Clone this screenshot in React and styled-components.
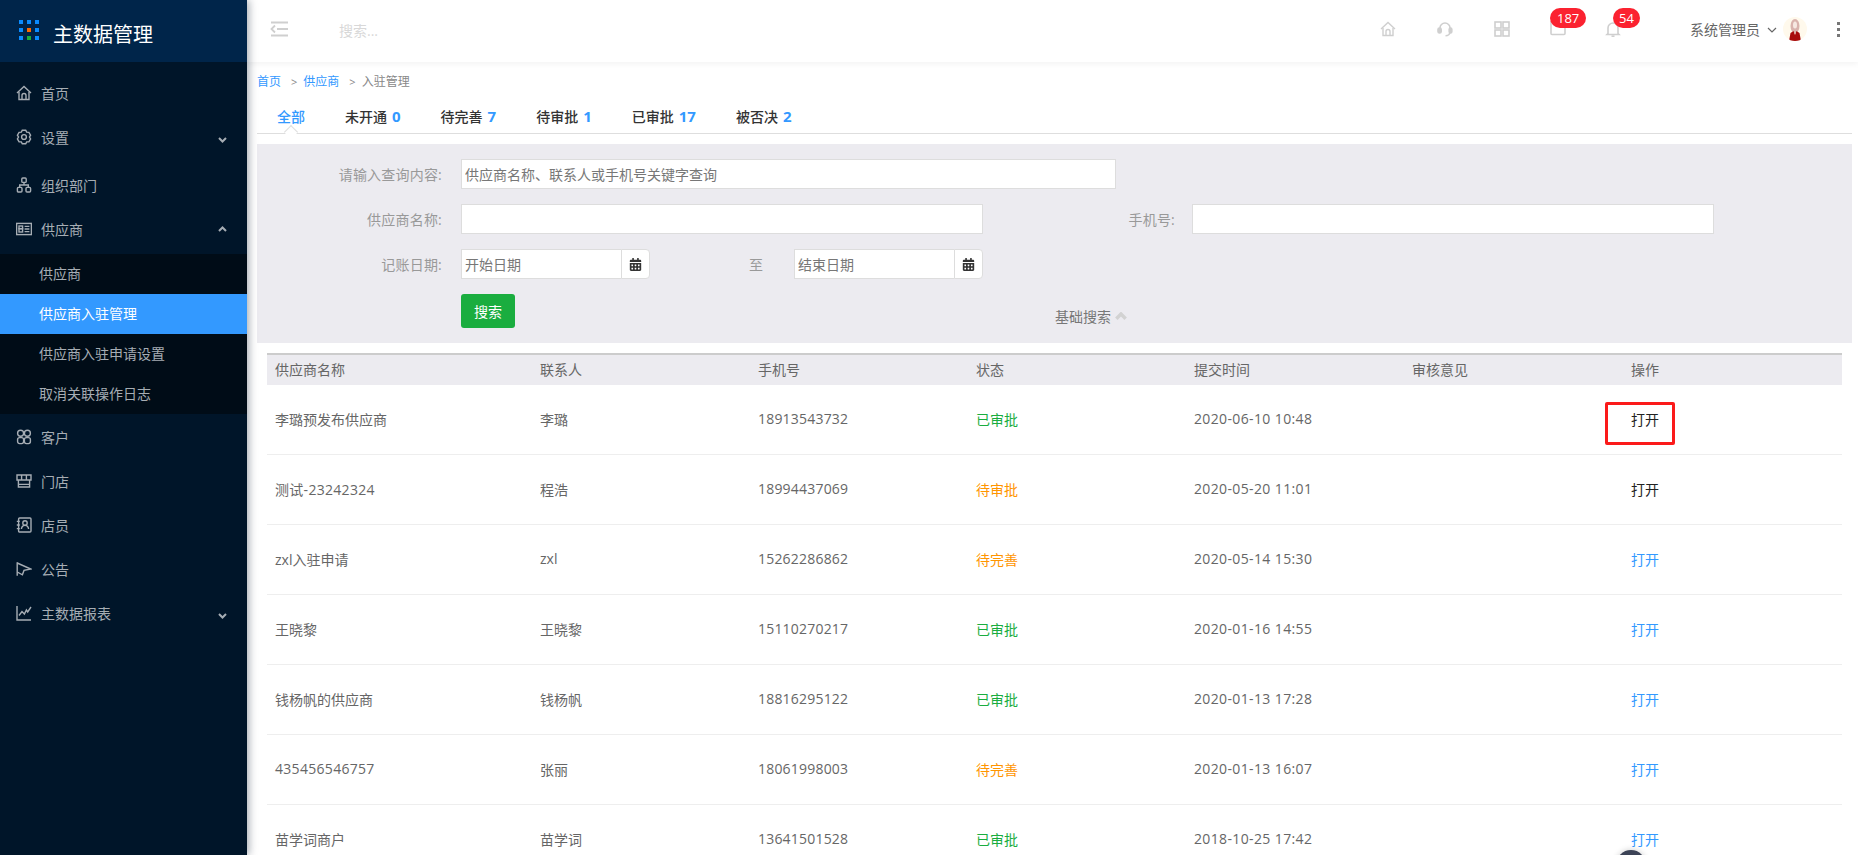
import React from "react";
import styled, { createGlobalStyle } from "styled-components";
import { FaCalendarAlt } from "react-icons/fa";

const GlobalStyle = createGlobalStyle`
  html, body {
    margin: 0;
    height: 100%;
    overflow: hidden;
    background: #fff;
    font-family: "Open Sans", "Noto Sans CJK SC", sans-serif;
    font-size: 14px;
    color: #666;
  }
  * { box-sizing: border-box; }
`;

const Layout = styled.div`
  display: flex;
  width: 100%;
  height: 100vh;
  overflow: hidden;
`;

/* sidebar */
const Sidebar = styled.aside`
  flex: 0 0 247px;
  background: #001529;
  color: #a6adb4;
  box-shadow: 2px 0 8px rgba(0, 21, 41, 0.35);
  z-index: 3;
`;
const Brand = styled.div`
  display: flex;
  align-items: center;
  height: 62px;
  padding-left: 19px;
  background: #00254a;
`;
const Dots = styled.div`
  display: grid;
  grid-template-columns: repeat(3, 4px);
  grid-auto-rows: 4px;
  gap: 4px;
  margin-top: -2px;
`;
const Dot = styled.i`
  background: ${(props) => props.$color || "#0a8cff"};
`;
const BrandName = styled.div`
  margin-left: 14px;
  padding-top: 4px;
  color: #fff;
  font-size: 20px;
`;
const Menu = styled.nav`
  padding-top: 10px;
`;
const MenuItem = styled.div`
  display: flex;
  align-items: center;
  height: 44px;
  padding: 0 20px 2px 16px;
  margin-bottom: ${(props) => props.$after || 0}px;
  svg.icon { width: 16px; height: 16px; margin-right: 9px; flex: none; }
  svg.arrow { width: 9px; height: 6px; margin-left: auto; margin-top: ${(props) => (props.$open ? 0 : 5)}px; }
`;
const SubMenu = styled.div`
  background: #000c17;
  margin-bottom: 2px;
`;
const SubItem = styled.div`
  height: 40px;
  line-height: 40px;
  padding-left: 39px;
  background: ${(props) => (props.$active ? "#3399ff" : "transparent")};
  color: ${(props) => (props.$active ? "#fff" : "#a6adb4")};
`;

/* top bar */
const Main = styled.main`
  flex: 1;
  min-width: 0;
`;
const TopBar = styled.header`
  display: flex;
  align-items: center;
  height: 62px;
  padding: 0 18px 0 23px;
  background: #fff;
  box-shadow: 0 2px 6px rgba(0, 0, 0, 0.05);
  color: #cfcfcf;
  svg.toggle { width: 18px; height: 16px; margin-top: -4px; }
`;
const SearchHint = styled.div`
  flex: 1;
  margin: -2px 0 0 51px;
  color: #d8d8d8;
`;
const IconSlot = styled.div`
  position: relative;
  display: flex;
  justify-content: center;
  width: ${(props) => props.$width || 57}px;
  margin-top: -4px;
  svg { width: 16px; height: 16px; }
`;
const Badge = styled.span`
  position: absolute;
  top: -13px;
  left: ${(props) => props.$left}px;
  height: 20px;
  padding: 0 ${(props) => props.$pad}px;
  border-radius: 10px;
  background: #fb2230;
  color: #fff;
  font-size: 13px;
  line-height: 20px;
`;
const UserName = styled.div`
  margin: -4px 0 0 50px;
  color: #666;
  font-size: 14px;
`;
const UserArrow = styled.svg`
  width: 10px;
  height: 6px;
  margin: -2px 0 0 7px;
  color: #666;
`;
const Avatar = styled.div`
  width: 24px;
  height: 24px;
  margin: -4px 0 0 6px;
  border-radius: 50%;
  background: #fff9ec;
  overflow: hidden;
  svg { display: block; width: 24px; height: 24px; }
`;
const Kebab = styled.div`
  display: grid;
  gap: 3px;
  margin: -4px 0 0 30px;
  i { display: block; width: 3px; height: 3px; background: #777; }
`;

/* content */
const Content = styled.div`
  padding: 0 6px 0 10px;
`;
const Crumbs = styled.div`
  display: flex;
  align-items: center;
  height: 20px;
  margin-top: 9px;
  font-size: 12px;
  color: #888;
  a { color: #3399ff; }
  b { font-weight: 400; margin: 0 6px 0 10px; font-size: 11px; }
`;
const Tabs = styled.div`
  display: flex;
  height: 43px;
  padding-top: 15px;
  border-bottom: 1px solid #dedede;
`;
const Tab = styled.div`
  position: relative;
  height: 27px;
  padding: 0 20px;
  font-weight: 500;
  color: ${(props) => (props.$active ? "#3399ff" : "#333")};
  span { margin-left: 5px; color: #3399ff; font-size: 15px; font-weight: 700; }
  ${(props) =>
    props.$active &&
    `&::after {
      content: "";
      position: absolute;
      left: 29px;
      bottom: -4px;
      width: 9px;
      height: 9px;
      background: #fff;
      border-left: 1px solid #dedede;
      border-top: 1px solid #dedede;
      transform: rotate(45deg);
    }`}
`;
const Filter = styled.section`
  display: grid;
  gap: 15px;
  margin-top: 10px;
  padding: 15px 0;
  background: #ecebf0;
`;
const FilterRow = styled.div`
  display: flex;
  align-items: center;
`;
const Label = styled.label`
  flex: none;
  width: ${(props) => props.$width || 185}px;
  margin-right: ${(props) => props.$gap || 19}px;
  text-align: right;
  letter-spacing: 0.2px;
  color: #999;
`;
const Input = styled.input`
  width: ${(props) => props.$width}px;
  height: 30px;
  padding: 0 3px;
  border: 1px solid #ddd;
  border-right-width: ${(props) => (props.$joined ? 0 : 1)}px;
  outline: none;
  background: #fff;
  font: inherit;
  color: #666;
  &::placeholder { color: #777; opacity: 1; }
`;
const DateGroup = styled.div`
  display: flex;
`;
const DateAddon = styled.span`
  display: flex;
  align-items: center;
  justify-content: center;
  width: 29px;
  height: 30px;
  border: 1px solid #ddd;
  border-radius: 0 4px 4px 0;
  background: #fff;
  color: #333;
  font-size: 13px;
`;
const Until = styled.span`
  margin: 0 31px 0 99px;
  color: #999;
`;
const SearchButton = styled.button`
  width: 54px;
  height: 34px;
  margin-left: 204px;
  padding: 0;
  border: 0;
  border-radius: 3px;
  background: #1aad3f;
  color: #fff;
  font: inherit;
`;
const Toggle = styled.div`
  display: flex;
  align-items: center;
  gap: 4px;
  margin: 10px 0 0 540px;
  color: #777;
  svg { width: 12px; height: 8px; color: #d2d2d2; stroke-width: 2.6; }
`;

/* table */
const Table = styled.div`
  margin: 10px 10px 0;
`;
const columns = "265px 218px 218px 218px 218px 219px 219px";
const HeadRow = styled.div`
  display: grid;
  grid-template-columns: ${columns};
  align-items: center;
  height: 32px;
  padding-bottom: 2px;
  border-top: 2px solid #ccc;
  background: #ecebf0;
  color: #666;
`;
const Row = styled.div`
  display: grid;
  grid-template-columns: ${columns};
  align-items: center;
  height: 70px;
  padding-bottom: 2px;
  border-bottom: 1px solid #eee;
`;
const Cell = styled.div`
  padding-left: 8px;
  letter-spacing: ${(props) => props.$spacing || 0}px;
  color: ${(props) => props.$color || "#666"};
`;
const ActionCell = styled(Cell)`
  position: relative;
`;
const Marker = styled.span`
  position: absolute;
  left: -18px;
  top: calc(50% - 17px);
  width: 70px;
  height: 43px;
  border: 3px solid #fb1a1a;
  border-radius: 2px;
`;
const HelpBall = styled.div`
  position: fixed;
  left: 1616px;
  top: 850px;
  width: 30px;
  height: 30px;
  border-radius: 50%;
  background: #3c4356;
  box-shadow: 0 0 6px rgba(0, 0, 0, 0.2);
`;

const Line = (props) => (
  <svg viewBox="0 0 16 16" fill="none" stroke="currentColor" strokeWidth="1.4" {...props} />
);
const HomeIcon = (p) => (
  <Line {...p}>
    <path d="M1 8 8 1.5 15 8" />
    <path d="M3 7v7.500h10V7" />
    <path d="M6 14.500v-4a2 2 0 0 1 4 0v4" />
  </Line>
);
const GearIcon = (p) => (
  <Line {...p}>
    <path d="M6.300 1.200h3.400l1 1.900 2.200.2 1.700 2.900-1.100 1.800 1.100 1.900-1.700 2.900-2.200.1-1 1.900H6.300l-1-1.900-2.200-.1-1.700-2.900L2.500 8 1.400 6.200l1.700-2.900 2.200-.2z" />
    <circle cx="8" cy="8" r="2.400" />
  </Line>
);
const OrgIcon = (p) => (
  <Line {...p}>
    <rect x="5.800" y="1" width="4.400" height="4.400" rx="1" />
    <rect x="1.400" y="10.400" width="4.600" height="4.600" rx="1" />
    <rect x="10" y="10.400" width="4.600" height="4.600" rx="1" />
    <path d="M8 5.400V8M3.700 10.400V8h8.600v2.400" />
  </Line>
);
const CardIcon = (p) => (
  <Line {...p}>
    <rect x="0.600" y="2.400" width="14.800" height="11.200" />
    <rect x="3" y="5" width="3.600" height="2.600" />
    <rect x="3" y="7.800" width="3.600" height="3.200" />
    <path d="M8.600 5.400h4.800M8.600 8h4.800M8.600 10.600h4.800" />
  </Line>
);
const ClientIcon = (p) => (
  <Line {...p}>
    <circle cx="4.600" cy="4.200" r="3" />
    <circle cx="11.400" cy="4.200" r="3" />
    <rect x="1.600" y="8.600" width="6" height="6" rx="2" />
    <rect x="8.400" y="8.600" width="6" height="6" rx="2" />
  </Line>
);
const StoreIcon = (p) => (
  <Line {...p}>
    <path d="M1 2h14v5H1zM5.600 2v5M10.400 2v5" />
    <path d="M2.400 7v7h11.200V7M2.400 11.400h11.200" />
  </Line>
);
const StaffIcon = (p) => (
  <Line {...p}>
    <rect x="2.600" y="1" width="12.400" height="14" rx="1" />
    <circle cx="9" cy="6" r="2.200" />
    <path d="M5.400 12c.4-2.600 2-3.600 3.600-3.600s3.200 1 3.600 3.600" />
    <path d="M.8 4.400h3M.8 8h3M.8 11.600h3" />
  </Line>
);
const NoticeIcon = (p) => (
  <Line {...p}>
    <path d="M1.200 1.200v13.600" />
    <path d="M1.200 2l13.600 6-6.800 1.400-1.600 4.400-5.200-2.800" />
  </Line>
);
const ChartIcon = (p) => (
  <Line {...p}>
    <path d="M1 1v14h14" />
    <path d="M3 10.500l3-4 2.400 2.500 2-4 1.300 2L15 2" />
  </Line>
);
const Chevron = ({ up, ...p }) => (
  <svg viewBox="0 0 9 6" fill="none" stroke="currentColor" strokeWidth="2" {...p}>
    <path d={up ? "M1 5l3.500-3.500L8 5" : "M1 1l3.500 3.500L8 1"} />
  </svg>
);

const logoDots = ["", "", "", "", "#ff6a00", "", "", "#1aad3a", ""];
const rows = [
  ["李璐预发布供应商", "李璐", "18913543732", "已审批", "2020-06-10 10:48", true],
  ["测试-23242324", "程浩", "18994437069", "待审批", "2020-05-20 11:01", true],
  ["zxl入驻申请", "zxl", "15262286862", "待完善", "2020-05-14 15:30"],
  ["王晓黎", "王晓黎", "15110270217", "已审批", "2020-01-16 14:55"],
  ["钱杨帆的供应商", "钱杨帆", "18816295122", "已审批", "2020-01-13 17:28"],
  ["435456546757", "张丽", "18061998003", "待完善", "2020-01-13 16:07"],
  ["苗学词商户", "苗学词", "13641501528", "已审批", "2018-10-25 17:42"],
];
const heads = ["供应商名称", "联系人", "手机号", "状态", "提交时间", "审核意见", "操作"];
const tabs = [["全部"], ["未开通", 0], ["待完善", 7], ["待审批", 1], ["已审批", 17], ["被否决", 2]];
const statusColor = (s) => (s === "已审批" ? "#1aad3f" : "#ff9500");

const App = () => {
  return (
    <Layout>
      <GlobalStyle />
      <Sidebar>
        <Brand>
          <Dots>{logoDots.map((c, i) => <Dot key={i} $color={c} />)}</Dots>
          <BrandName>主数据管理</BrandName>
        </Brand>
        <Menu>
          <MenuItem><HomeIcon className="icon" />首页</MenuItem>
          <MenuItem $after={4}><GearIcon className="icon" />设置<Chevron className="arrow" /></MenuItem>
          <MenuItem><OrgIcon className="icon" />组织部门</MenuItem>
          <MenuItem $after={2} $open><CardIcon className="icon" />供应商<Chevron className="arrow" up /></MenuItem>
          <SubMenu>
            <SubItem>供应商</SubItem>
            <SubItem $active>供应商入驻管理</SubItem>
            <SubItem>供应商入驻申请设置</SubItem>
            <SubItem>取消关联操作日志</SubItem>
          </SubMenu>
          <MenuItem><ClientIcon className="icon" />客户</MenuItem>
          <MenuItem><StoreIcon className="icon" />门店</MenuItem>
          <MenuItem><StaffIcon className="icon" />店员</MenuItem>
          <MenuItem><NoticeIcon className="icon" />公告</MenuItem>
          <MenuItem><ChartIcon className="icon" />主数据报表<Chevron className="arrow" /></MenuItem>
        </Menu>
      </Sidebar>
      <Main>
        <TopBar>
          <svg className="toggle" viewBox="0 0 18 16" fill="none" stroke="currentColor" strokeWidth="1.800">
            <path d="M1 1.500h17M7 8h11M1 14.500h17M5 4.500 1.500 8 5 11.500" />
          </svg>
          <SearchHint>搜索...</SearchHint>
          <IconSlot><HomeIcon /></IconSlot>
          <IconSlot>
            <Line strokeWidth="1.600">
              <path d="M3 7.500V7a5 5 0 0 1 10 0v3.500c0 2.500-2 4.300-4.500 4.300" />
              <rect x="1" y="7" width="3.200" height="5" rx="1.500" fill="currentColor" />
              <rect x="12.200" y="7" width="2.600" height="5" rx="1.300" fill="currentColor" />
            </Line>
          </IconSlot>
          <IconSlot>
            <Line strokeWidth="1.600">
              <rect x="1" y="1" width="6" height="6" />
              <rect x="9" y="1" width="6" height="6" />
              <rect x="1" y="9" width="6" height="6" />
              <rect x="9" y="9" width="6" height="6" />
            </Line>
          </IconSlot>
          <IconSlot $width={55}>
            <Line strokeWidth="1.600"><rect x="1" y="0" width="14" height="13.500" rx="1" /></Line>
            <Badge $left={20} $pad={7}>187</Badge>
          </IconSlot>
          <IconSlot $width={55}>
            <Line strokeWidth="1.600">
              <path d="M3 12.500V7a5 5 0 0 1 10 0v5.500l1 1H2zM6.500 15.200h3" />
            </Line>
            <Badge $left={28} $pad={6}>54</Badge>
          </IconSlot>
          <UserName>系统管理员</UserName>
          <UserArrow viewBox="0 0 10 6" fill="none" stroke="currentColor" strokeWidth="1.200">
            <path d="M1 1l4 4 4-4" />
          </UserArrow>
          <Avatar>
            <svg viewBox="0 0 24 24">
              <ellipse cx="12" cy="9" rx="4.500" ry="7" fill="#d9b3ae" />
              <ellipse cx="12" cy="8" rx="2" ry="3.500" fill="#f6e8e2" />
              <path d="M6 24l1.500-8 3-2 1.500 4 1.500-4 3 2L18 24z" fill="#a80c0c" />
            </svg>
          </Avatar>
          <Kebab><i /><i /><i /></Kebab>
        </TopBar>
        <Content>
          <Crumbs>
            <a>首页</a><b>&gt;</b><a>供应商</a><b>&gt;</b>入驻管理
          </Crumbs>
          <Tabs>
            {tabs.map(([name, count], i) => (
              <Tab key={name} $active={i === 0}>
                {name}
                {count !== undefined && <span>{count}</span>}
              </Tab>
            ))}
          </Tabs>
          <Filter>
            <FilterRow>
              <Label>请输入查询内容:</Label>
              <Input $width={655} placeholder="供应商名称、联系人或手机号关键字查询" />
            </FilterRow>
            <FilterRow>
              <Label>供应商名称:</Label>
              <Input $width={522} />
              <Label $width={192} $gap={17}>手机号:</Label>
              <Input $width={522} />
            </FilterRow>
            <FilterRow>
              <Label>记账日期:</Label>
              <DateGroup>
                <Input $width={160} $joined placeholder="开始日期" />
                <DateAddon><FaCalendarAlt /></DateAddon>
              </DateGroup>
              <Until>至</Until>
              <DateGroup>
                <Input $width={160} $joined placeholder="结束日期" />
                <DateAddon><FaCalendarAlt /></DateAddon>
              </DateGroup>
            </FilterRow>
            <FilterRow>
              <SearchButton>搜索</SearchButton>
              <Toggle>基础搜索<Chevron up /></Toggle>
            </FilterRow>
          </Filter>
          <Table>
            <HeadRow>{heads.map((h) => <Cell key={h}>{h}</Cell>)}</HeadRow>
            {rows.map((r, i) => (
              <Row key={r[2]}>
                <Cell $spacing={/\d{4}/.test(r[0]) ? 0.3 : 0}>{r[0]}</Cell>
                <Cell>{r[1]}</Cell>
                <Cell $spacing={0.2}>{r[2]}</Cell>
                <Cell $color={statusColor(r[3])}>{r[3]}</Cell>
                <Cell $spacing={0.37}>{r[4]}</Cell>
                <Cell />
                <ActionCell $color={r[5] ? "#222" : "#3399ff"}>
                  打开
                  {i === 0 && <Marker />}
                </ActionCell>
              </Row>
            ))}
          </Table>
        </Content>
      </Main>
      <HelpBall />
    </Layout>
  );
};

export default App;
